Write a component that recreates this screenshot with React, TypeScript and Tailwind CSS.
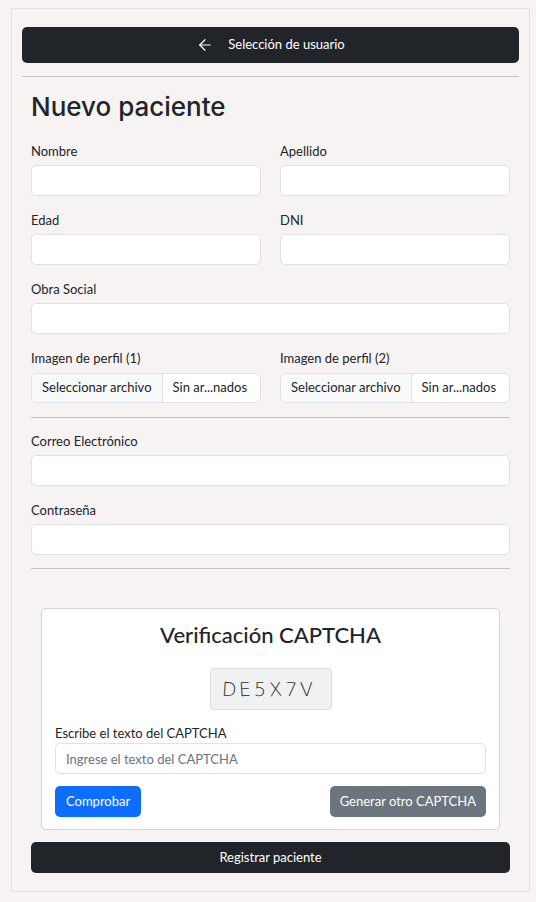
import { ArrowLeft } from 'lucide-react';

const font = { fontFamily: '"Segoe UI", Lato, "Noto Sans", sans-serif' };

function Field({ label, className = '' }: { label: string; className?: string }) {
  return (
    <div className={`flex flex-col ${className}`}>
      <label className="mb-[5px] text-[13px] leading-[18px] text-[#212529]">{label}</label>
      <input className="h-[31px] rounded-[5px] border border-[#dee2e6] bg-white px-3 text-[13px] outline-none" />
    </div>
  );
}

function FileField({ label }: { label: string }) {
  return (
    <div className="flex flex-col">
      <label className="mb-[6px] text-[13px] leading-[18px] text-[#212529]">{label}</label>
      <div className="flex h-[30px] overflow-hidden rounded-[5px] border border-[#dee2e6] bg-white text-[13px] text-[#212529]">
        <span className="flex items-center border-r border-[#dee2e6] bg-[#f8f9fa] px-[10px]">Seleccionar archivo</span>
        <span className="flex items-center px-[10px]">Sin ar...nados</span>
      </div>
    </div>
  );
}

// characters of the captcha, each slightly tilted like the canvas drawing
const CAPTCHA = [
  { ch: 'D', cls: 'rotate-[4deg]' },
  { ch: 'E', cls: '-rotate-[3deg]' },
  { ch: '5', cls: 'rotate-[2deg]' },
  { ch: 'X', cls: '-rotate-[4deg]' },
  { ch: '7', cls: 'rotate-[3deg]' },
  { ch: 'V', cls: '-rotate-[2deg]' },
];

export default function App() {
  return (
    <div className="min-h-[902px] bg-[#f7f3f2] pt-2" style={font}>
      <div className="ml-[11px] w-[519px] border border-[#dee2e6] bg-[#f7f3f2] px-[10px] pt-[18px] pb-[18px]">
        <button className="flex h-9 w-full items-center justify-center gap-[14px] rounded-[5px] bg-[#212529] text-[13px] text-white">
          <ArrowLeft size={18} strokeWidth={1.6} />
          <span>Selección de usuario</span>
        </button>
        <hr className="mt-[13px] border-t border-[#c4c2c1]" />

        <div className="px-[9px]">
          <h1
            className="mt-[14px] mb-[19px] text-[26px] font-medium leading-[32px] text-[#212529]"
            style={{ fontFamily: 'Inter, "Noto Sans", sans-serif' }}
          >
            Nuevo paciente
          </h1>

          <div className="grid grid-cols-2 gap-x-[19px] gap-y-[15px]">
            <Field label="Nombre" />
            <Field label="Apellido" />
            <Field label="Edad" />
            <Field label="DNI" />
            <Field label="Obra Social" className="col-span-2" />
            <FileField label="Imagen de perfil (1)" />
            <FileField label="Imagen de perfil (2)" />
          </div>

          <hr className="mt-[14px] mb-[14px] border-t border-[#c4c2c1]" />

          <div className="flex flex-col gap-[15px]">
            <Field label="Correo Electrónico" />
            <Field label="Contraseña" />
          </div>

          <hr className="mt-[13px] border-t border-[#c4c2c1]" />

          <div className="mx-[10px] mt-[39px] rounded-[5px] border border-[#d3d3d3] bg-white px-[13px] pt-[12px] pb-[12px]">
            <h2 className="text-center text-[22px] font-medium leading-[28px] text-[#212529]">Verificación CAPTCHA</h2>
            <div className="mt-[19px] flex justify-center">
              <div className="flex h-[42px] w-[122px] items-center justify-center gap-[3px] rounded-[4px] border border-[#dcdcdc] bg-[#f1f1f1] pr-[6px]">
                {CAPTCHA.map((c, i) => (
                  <span
                    key={i}
                    className={`inline-block text-[19px] leading-none text-[#2e2e2e] ${c.cls}`}
                    style={{ fontFamily: '"DejaVu Sans", sans-serif', fontWeight: 200 }}
                  >
                    {c.ch}
                  </span>
                ))}
              </div>
            </div>
            <label className="mt-[14px] block text-[13px] leading-[18px] text-[#212529]">Escribe el texto del CAPTCHA</label>
            <input
              placeholder="Ingrese el texto del CAPTCHA"
              className="mt-[1px] h-[31px] w-full rounded-[5px] border border-[#dee2e6] bg-white px-[10px] text-[13px] text-[#212529] outline-none placeholder:text-[#6c757d]"
            />
            <div className="mt-[12px] flex justify-between">
              <button className="h-[31px] rounded-[5px] bg-[#0d6efd] px-[11px] text-[13px] text-white">Comprobar</button>
              <button className="h-[31px] rounded-[5px] bg-[#6c757d] px-[10px] text-[13px] text-white">Generar otro CAPTCHA</button>
            </div>
          </div>

          <button className="mt-[12px] h-[31px] w-full rounded-[5px] bg-[#212529] text-[13px] text-white">Registrar paciente</button>
        </div>
      </div>
    </div>
  );
}
